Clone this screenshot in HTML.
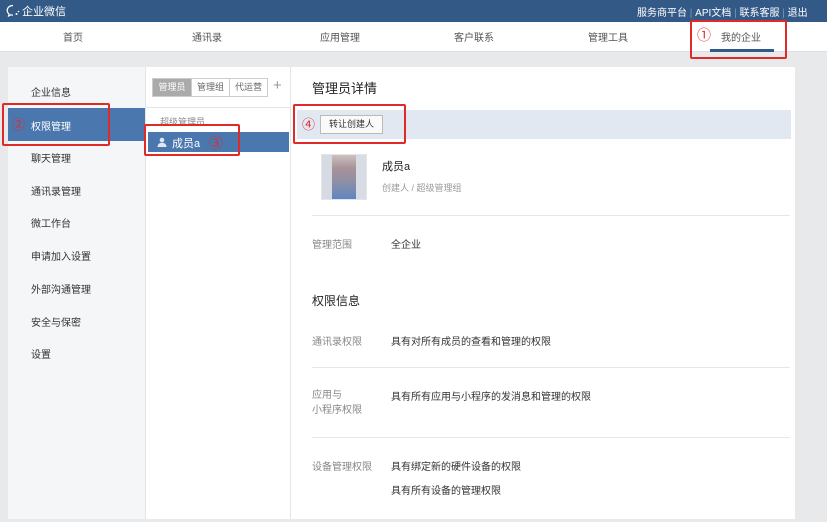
<!DOCTYPE html>
<html><head><meta charset="utf-8"><style>
*{margin:0;padding:0;box-sizing:border-box}
body{width:827px;height:522px;overflow:hidden;background:#e8e9eb;font-family:"Liberation Sans","Noto Sans CJK SC",sans-serif;font-size:10px;color:#333;position:relative}
.a{position:absolute}
.top{left:0;top:0;width:827px;height:22px;background:#335a87;color:#fff}
.nav{left:0;top:22px;width:827px;height:30px;background:#fff;border-bottom:1px solid #dde}
.nav span{position:absolute;top:7px;color:#555;font-size:10px}
.panel{left:8px;top:67px;width:787px;height:452px;background:#fff}
.side{left:8px;top:67px;width:137px;height:452px;background:#f5f6f8}
.side div{position:absolute;left:23px;font-size:10px;color:#333}
.red{position:absolute;border:2px solid #e02a2a;border-radius:2px}
.lbl{color:#888}
.hr{position:absolute;left:312px;width:478px;height:1px;background:#e6e6e6}
</style></head><body>
<div class="a top">
 <svg class="a" style="left:6px;top:4px" width="14" height="14" viewBox="0 0 14 14"><path d="M7 1.5C3.5 1.5 1.2 3.8 1.2 6.4c0 1.5.7 2.8 1.9 3.6L2.6 12l2.3-1.2c.7.2 1.4.3 2.1.3" fill="none" stroke="#fff" stroke-width="1.2"/><circle cx="10.5" cy="10" r="1" fill="#fff"/><circle cx="12.5" cy="7.5" r=".8" fill="#fff"/></svg>
 <span class="a" style="left:22px;top:3px;font-size:11px">企业微信</span>
 <span class="a" style="left:637px;top:4px;font-size:10px">服务商平台 <span style="color:#7d94b3">|</span> API文档 <span style="color:#7d94b3">|</span> 联系客服 <span style="color:#7d94b3">|</span> 退出</span>
</div>
<div class="a nav">
 <span style="left:63px">首页</span><span style="left:192px">通讯录</span><span style="left:320px">应用管理</span><span style="left:454px">客户联系</span><span style="left:588px">管理工具</span><span style="left:721px">我的企业</span>
 <div class="a" style="left:710px;top:27px;width:64px;height:3px;background:#335a87"></div>
 <span style="left:697px;top:3px;color:#e02a2a;font-size:14px">①</span>
</div>
<div class="red" style="left:690px;top:20px;width:97px;height:39px"></div>
<div class="a panel"></div>
<div class="a side">
 <div style="top:17px">企业信息</div>
 <div style="top:41px;left:0;width:137px;height:33px;background:#4a77ad"></div>
 <div style="top:51px;color:#fff">权限管理</div>
 <div style="top:47px;left:4px;color:#e02a2a;font-size:13px">②</div>
 <div style="top:83px">聊天管理</div>
 <div style="top:116px">通讯录管理</div>
 <div style="top:148px">微工作台</div>
 <div style="top:181px">申请加入设置</div>
 <div style="top:214px">外部沟通管理</div>
 <div style="top:247px">安全与保密</div>
 <div style="top:279px">设置</div>
</div>
<div class="red" style="left:2px;top:103px;width:108px;height:43px"></div>
<div class="a" style="left:145px;top:67px;width:1px;height:452px;background:#e5e5e5"></div>
<div class="a" style="left:290px;top:67px;width:1px;height:452px;background:#e5e5e5"></div>
<div class="a" style="left:152px;top:78px;width:116px;height:19px;border:1px solid #ccc;font-size:9px;color:#666">
 <span class="a" style="left:0;top:0;width:38px;height:17px;background:#aaa;color:#fff;text-align:center;line-height:17px">管理员</span>
 <span class="a" style="left:38px;top:0;width:38px;height:17px;border-left:1px solid #ccc;text-align:center;line-height:17px">管理组</span>
 <span class="a" style="left:76px;top:0;width:38px;height:17px;border-left:1px solid #ccc;text-align:center;line-height:17px">代运营</span>
</div>
<span class="a" style="left:273px;top:77px;font-size:15px;color:#999">+</span>
<div class="a" style="left:145px;top:107px;width:145px;height:1px;background:#e5e5e5"></div>
<span class="a" style="left:160px;top:115px;font-size:9px;color:#888">超级管理员</span>
<div class="a" style="left:148px;top:132px;width:141px;height:20px;background:#4a77ad;color:#fff">
 <svg class="a" style="left:9px;top:5px" width="10" height="10" viewBox="0 0 10 10"><circle cx="5" cy="3" r="2.3" fill="#dfe7f1"/><path d="M0.5 10c0-3 2-4.3 4.5-4.3S9.5 7 9.5 10z" fill="#dfe7f1"/></svg>
 <span class="a" style="left:24px;top:3px;font-size:11px">成员a</span>
 <span class="a" style="left:61px;top:1px;color:#e02a2a;font-size:14px">③</span>
</div>
<div class="red" style="left:144px;top:124px;width:96px;height:32px"></div>
<span class="a" style="left:312px;top:78px;font-size:13px;color:#222">管理员详情</span>
<div class="a" style="left:297px;top:110px;width:494px;height:29px;background:#e1e8f1"></div>
<div class="a" style="left:320px;top:115px;width:63px;height:19px;background:#fafafa;border:1px solid #bbb;font-size:9px;text-align:center;line-height:17px">转让创建人</div>
<span class="a" style="left:302px;top:114px;color:#e02a2a;font-size:13px">④</span>
<div class="red" style="left:293px;top:104px;width:113px;height:40px"></div>
<div class="a" style="left:321px;top:154px;width:46px;height:46px;border:1px solid #e5e5e5;background:#fff">
 <div class="a" style="left:10px;top:0;width:24px;height:44px;background:linear-gradient(#c9c2c0,#a89298 30%,#8e8fa5 60%,#5f86c1)"></div>
 <div class="a" style="left:0;top:0;width:10px;height:44px;background:#d6dbe3"></div>
 <div class="a" style="left:34px;top:0;width:10px;height:44px;background:#d7dce5"></div>
</div>
<span class="a" style="left:382px;top:158px;font-size:11px;color:#222">成员a</span>
<span class="a" style="left:382px;top:181px;font-size:9px;color:#999">创建人 / 超级管理组</span>
<div class="hr" style="top:215px"></div>
<span class="a lbl" style="left:312px;top:236px">管理范围</span>
<span class="a" style="left:391px;top:236px">全企业</span>
<span class="a" style="left:312px;top:292px;font-size:12px;color:#222">权限信息</span>
<span class="a lbl" style="left:312px;top:333px">通讯录权限</span>
<span class="a" style="left:391px;top:333px">具有对所有成员的查看和管理的权限</span>
<div class="hr" style="top:367px"></div>
<span class="a lbl" style="left:312px;top:388px;line-height:15px">应用与<br>小程序权限</span>
<span class="a" style="left:391px;top:388px">具有所有应用与小程序的发消息和管理的权限</span>
<div class="hr" style="top:437px"></div>
<span class="a lbl" style="left:312px;top:458px">设备管理权限</span>
<span class="a" style="left:391px;top:458px">具有绑定新的硬件设备的权限</span>
<span class="a" style="left:391px;top:482px">具有所有设备的管理权限</span>
</body></html>
